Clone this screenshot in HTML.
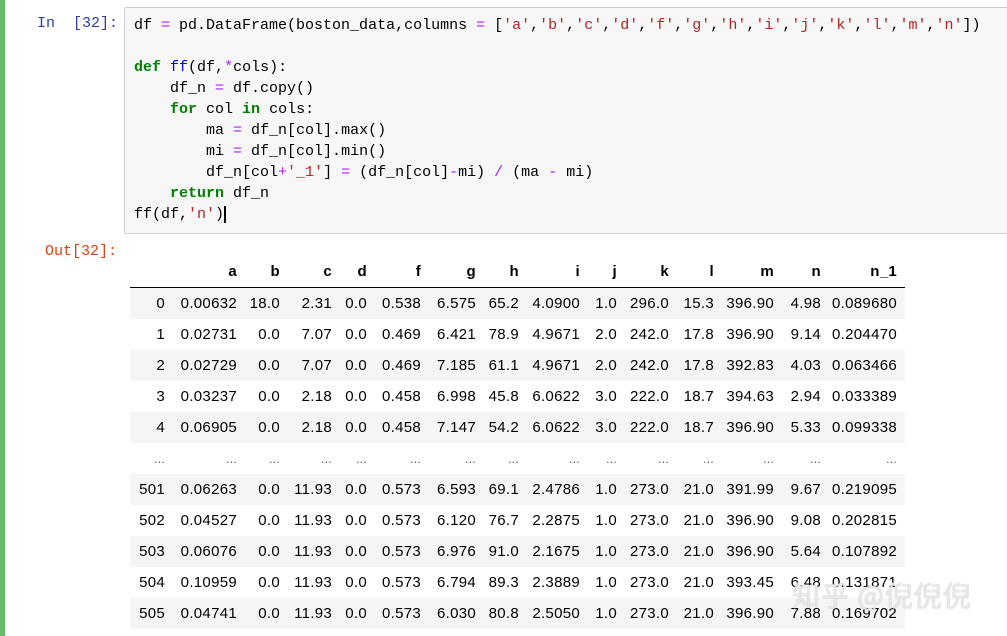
<!DOCTYPE html>
<html><head><meta charset="utf-8"><style>
body{margin:0;width:1007px;height:636px;background:#fff;position:relative;overflow:hidden;font-family:"Liberation Sans",Arial,sans-serif}
.bar{position:absolute;left:0;top:0;width:5px;height:636px;background:#66bb6a}
.prompt{position:absolute;font-family:"Liberation Mono",monospace;font-size:15px}
.code{position:absolute;left:124px;top:7px;width:900px;height:225px;background:#f7f7f7;border:1px solid #cfcfcf;border-radius:2px}
pre{margin:0;position:absolute;left:9px;top:7px;font-family:"Liberation Mono",monospace;font-size:15px;line-height:21px;color:#000}
.k{color:#008000;font-weight:bold}.o{color:#aa22ff}.s{color:#ba2121}.n{color:#0000ff}
table{position:absolute;left:130px;top:256px;width:775px;border-collapse:collapse;table-layout:fixed;font-size:15px;letter-spacing:0.3px;color:#000}
td,th{padding:0 8px 0 0;text-align:right;height:31px;white-space:nowrap;overflow:visible}
th{font-weight:bold;border-bottom:1px solid #000;height:31px}
tr.g td{background:#f5f5f5}
.wm{position:absolute;left:792px;top:575px;font-family:"Noto Sans CJK SC",sans-serif;font-size:28px;color:rgba(255,255,255,.75);text-shadow:0 0 1px #999;letter-spacing:1px}
</style></head><body>
<div class="bar"></div>
<div class="prompt" style="left:37px;top:15px;color:#303f9f">In&nbsp; [32]:</div>
<div class="code"><pre>df <span class="o">=</span> pd.DataFrame(boston_data,columns <span class="o">=</span> [<span class="s">'a'</span>,<span class="s">'b'</span>,<span class="s">'c'</span>,<span class="s">'d'</span>,<span class="s">'f'</span>,<span class="s">'g'</span>,<span class="s">'h'</span>,<span class="s">'i'</span>,<span class="s">'j'</span>,<span class="s">'k'</span>,<span class="s">'l'</span>,<span class="s">'m'</span>,<span class="s">'n'</span>])

<span class="k">def</span> <span class="n">ff</span>(df,<span class="o">*</span>cols):
    df_n <span class="o">=</span> df.copy()
    <span class="k">for</span> col <span class="k">in</span> cols:
        ma <span class="o">=</span> df_n[col].max()
        mi <span class="o">=</span> df_n[col].min()
        df_n[col<span class="o">+</span><span class="s">'_1'</span>] <span class="o">=</span> (df_n[col]<span class="o">-</span>mi) <span class="o">/</span> (ma <span class="o">-</span> mi)
    <span class="k">return</span> df_n
ff(df,<span class="s">'n'</span>)<span style="border-left:2px solid #000"></span></pre></div>
<div class="prompt" style="left:45px;top:243px;color:#d84315">Out[32]:</div>
<table>
<colgroup><col style="width:43px"><col style="width:72px"><col style="width:43px"><col style="width:52px"><col style="width:35px"><col style="width:54px"><col style="width:55px"><col style="width:43px"><col style="width:61px"><col style="width:37px"><col style="width:52px"><col style="width:45px"><col style="width:60px"><col style="width:47px"><col style="width:76px"></colgroup>
<tr><th></th><th>a</th><th>b</th><th>c</th><th>d</th><th>f</th><th>g</th><th>h</th><th>i</th><th>j</th><th>k</th><th>l</th><th>m</th><th>n</th><th>n_1</th></tr>
<tr class="g"><td>0</td><td>0.00632</td><td>18.0</td><td>2.31</td><td>0.0</td><td>0.538</td><td>6.575</td><td>65.2</td><td>4.0900</td><td>1.0</td><td>296.0</td><td>15.3</td><td>396.90</td><td>4.98</td><td>0.089680</td></tr>
<tr><td>1</td><td>0.02731</td><td>0.0</td><td>7.07</td><td>0.0</td><td>0.469</td><td>6.421</td><td>78.9</td><td>4.9671</td><td>2.0</td><td>242.0</td><td>17.8</td><td>396.90</td><td>9.14</td><td>0.204470</td></tr>
<tr class="g"><td>2</td><td>0.02729</td><td>0.0</td><td>7.07</td><td>0.0</td><td>0.469</td><td>7.185</td><td>61.1</td><td>4.9671</td><td>2.0</td><td>242.0</td><td>17.8</td><td>392.83</td><td>4.03</td><td>0.063466</td></tr>
<tr><td>3</td><td>0.03237</td><td>0.0</td><td>2.18</td><td>0.0</td><td>0.458</td><td>6.998</td><td>45.8</td><td>6.0622</td><td>3.0</td><td>222.0</td><td>18.7</td><td>394.63</td><td>2.94</td><td>0.033389</td></tr>
<tr class="g"><td>4</td><td>0.06905</td><td>0.0</td><td>2.18</td><td>0.0</td><td>0.458</td><td>7.147</td><td>54.2</td><td>6.0622</td><td>3.0</td><td>222.0</td><td>18.7</td><td>396.90</td><td>5.33</td><td>0.099338</td></tr>
<tr style="color:#555;font-size:12px"><td>...</td><td>...</td><td>...</td><td>...</td><td>...</td><td>...</td><td>...</td><td>...</td><td>...</td><td>...</td><td>...</td><td>...</td><td>...</td><td>...</td><td>...</td></tr>
<tr class="g"><td>501</td><td>0.06263</td><td>0.0</td><td>11.93</td><td>0.0</td><td>0.573</td><td>6.593</td><td>69.1</td><td>2.4786</td><td>1.0</td><td>273.0</td><td>21.0</td><td>391.99</td><td>9.67</td><td>0.219095</td></tr>
<tr><td>502</td><td>0.04527</td><td>0.0</td><td>11.93</td><td>0.0</td><td>0.573</td><td>6.120</td><td>76.7</td><td>2.2875</td><td>1.0</td><td>273.0</td><td>21.0</td><td>396.90</td><td>9.08</td><td>0.202815</td></tr>
<tr class="g"><td>503</td><td>0.06076</td><td>0.0</td><td>11.93</td><td>0.0</td><td>0.573</td><td>6.976</td><td>91.0</td><td>2.1675</td><td>1.0</td><td>273.0</td><td>21.0</td><td>396.90</td><td>5.64</td><td>0.107892</td></tr>
<tr><td>504</td><td>0.10959</td><td>0.0</td><td>11.93</td><td>0.0</td><td>0.573</td><td>6.794</td><td>89.3</td><td>2.3889</td><td>1.0</td><td>273.0</td><td>21.0</td><td>393.45</td><td>6.48</td><td>0.131871</td></tr>
<tr class="g"><td>505</td><td>0.04741</td><td>0.0</td><td>11.93</td><td>0.0</td><td>0.573</td><td>6.030</td><td>80.8</td><td>2.5050</td><td>1.0</td><td>273.0</td><td>21.0</td><td>396.90</td><td>7.88</td><td>0.169702</td></tr>
</table>
<div class="wm">知乎 @倪倪倪</div>
</body></html>
